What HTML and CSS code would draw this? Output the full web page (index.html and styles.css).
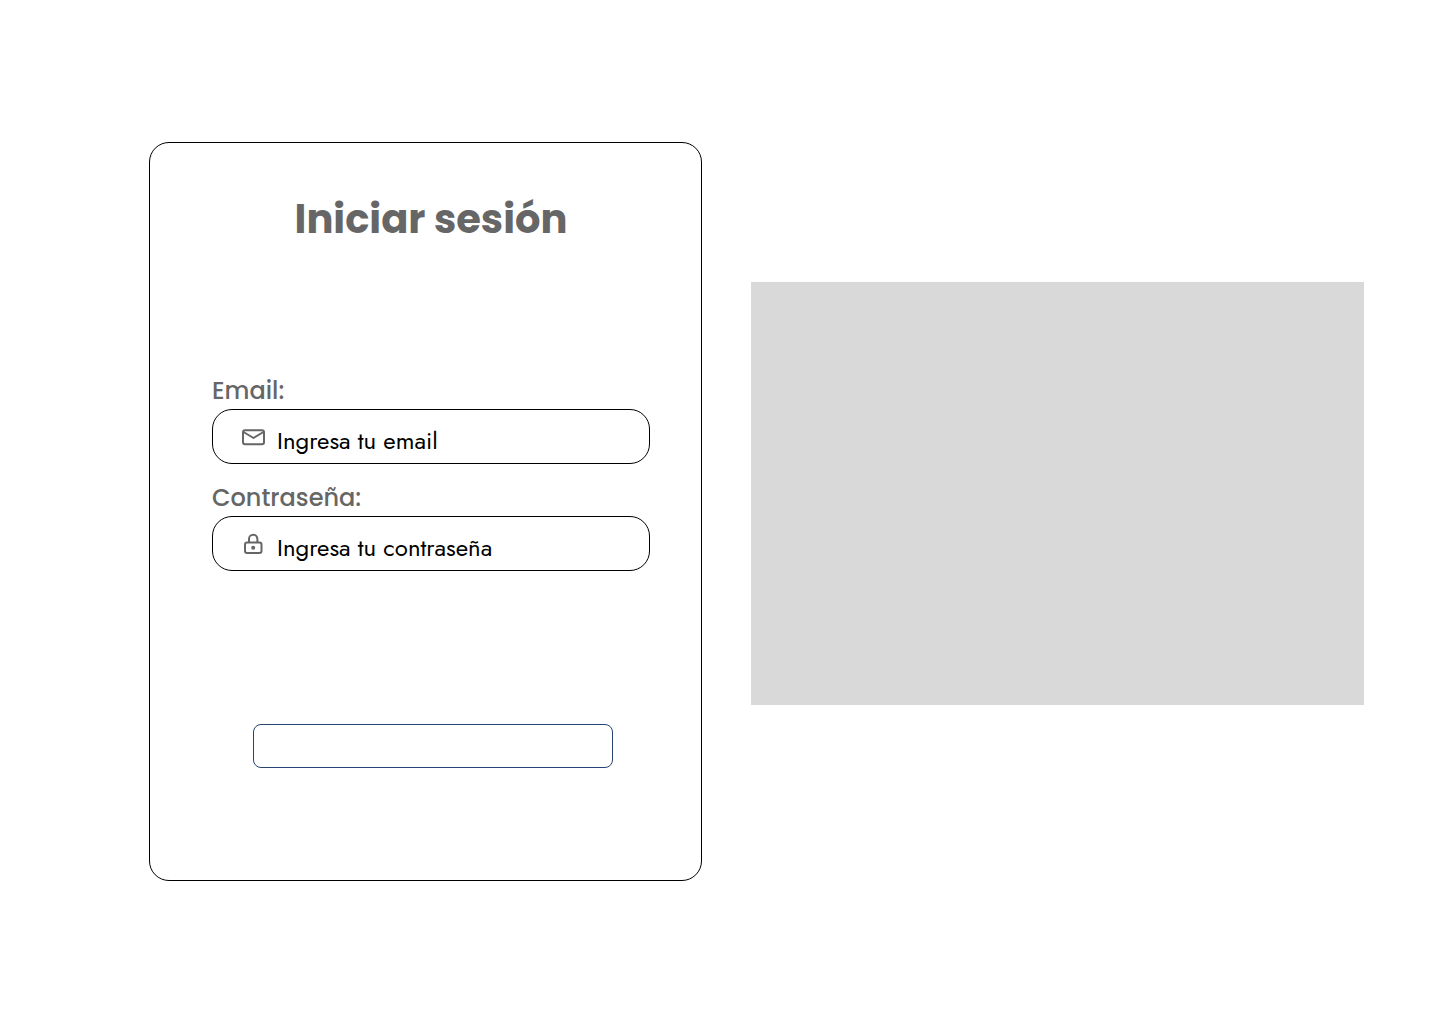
FILE: index.html
```html
<!DOCTYPE html>
<html lang="es">
<head>
  <meta charset="utf-8">
  <meta name="viewport" content="width=device-width, initial-scale=1">
  <title>Iniciar sesión</title>
  <link rel="stylesheet" href="styles.css">
</head>
<body>
  <main class="login">
    <form class="card">
      <h1 class="title">Iniciar sesión</h1>
      <div class="group">
        <label class="label" for="email">Email:</label>
        <div class="field">
          <svg class="icon" viewBox="0 0 24 24" aria-hidden="true">
            <rect x="1" y="5.300" width="21" height="14" rx="2"/>
            <path d="M1.500 7 11.500 13 21.500 7"/>
          </svg>
          <input class="input" id="email" type="email" placeholder="Ingresa tu email">
        </div>
      </div>
      <div class="group">
        <label class="label" for="password">Contraseña:</label>
        <div class="field">
          <svg class="icon" viewBox="0 0 24 24" aria-hidden="true">
            <rect x="3" y="10.500" width="16.500" height="10.500" rx="2"/>
            <path d="M7 10.500V7a4.200 4.200 0 0 1 8.400 0v3.500"/>
            <circle class="dot" cx="11.200" cy="15.700" r="2"/>
          </svg>
          <input class="input" id="password" type="password" placeholder="Ingresa tu contraseña">
        </div>
      </div>
      <button class="submit" type="submit" aria-label="Iniciar sesión"></button>
    </form>
    <div class="panel"></div>
  </main>
</body>
</html>
```

FILE: styles.css
```css
* {
  box-sizing: border-box;
}

body {
  margin: 0;
  background: #fff;
  color: #666;
  font-family: Poppins, Inter, sans-serif;
}

.login {
  display: grid;
  grid-template-columns: 553fr 613fr;
  gap: 49px;
  align-items: start;
  padding: 142px 76px 142px 149px;
}

.card {
  display: flex;
  flex-direction: column;
  padding: 46px 51px 112px 62px;
  border: 1px solid #000;
  border-radius: 20px;
}

.title {
  margin: 0 0 124px;
  font-size: 40px;
  font-weight: 700;
  line-height: 60px;
  text-align: center;
}

.group {
  display: flex;
  flex-direction: column;
}

.group + .group {
  margin-top: 16px;
}

.label {
  font-size: 24px;
  font-weight: 500;
  line-height: 36px;
}

.field {
  display: flex;
  align-items: center;
  gap: 11px;
  height: 55px;
  padding: 0 29px;
  border: 1px solid #000;
  border-radius: 20px;
}

.icon {
  flex: none;
  width: 24px;
  height: 24px;
  fill: none;
  stroke: #666;
  stroke-width: 2;
  stroke-linejoin: round;
}

.dot {
  fill: #666;
  stroke: none;
}

.input {
  flex: 1;
  min-width: 0;
  height: 100%;
  padding: 8px 0 0;
  border: 0;
  outline: 0;
  background: none;
  color: #000;
  font: 24px Jost, Lato, sans-serif;
}

.input::placeholder {
  color: #000;
  opacity: 1;
}

.submit {
  height: 44px;
  margin: 153px 37px 0 41px;
  border: 1px solid #264373;
  border-radius: 8px;
  background: #fff;
}

.panel {
  margin-top: 140px;
  aspect-ratio: 613 / 423;
  background: #d9d9d9;
}
```
